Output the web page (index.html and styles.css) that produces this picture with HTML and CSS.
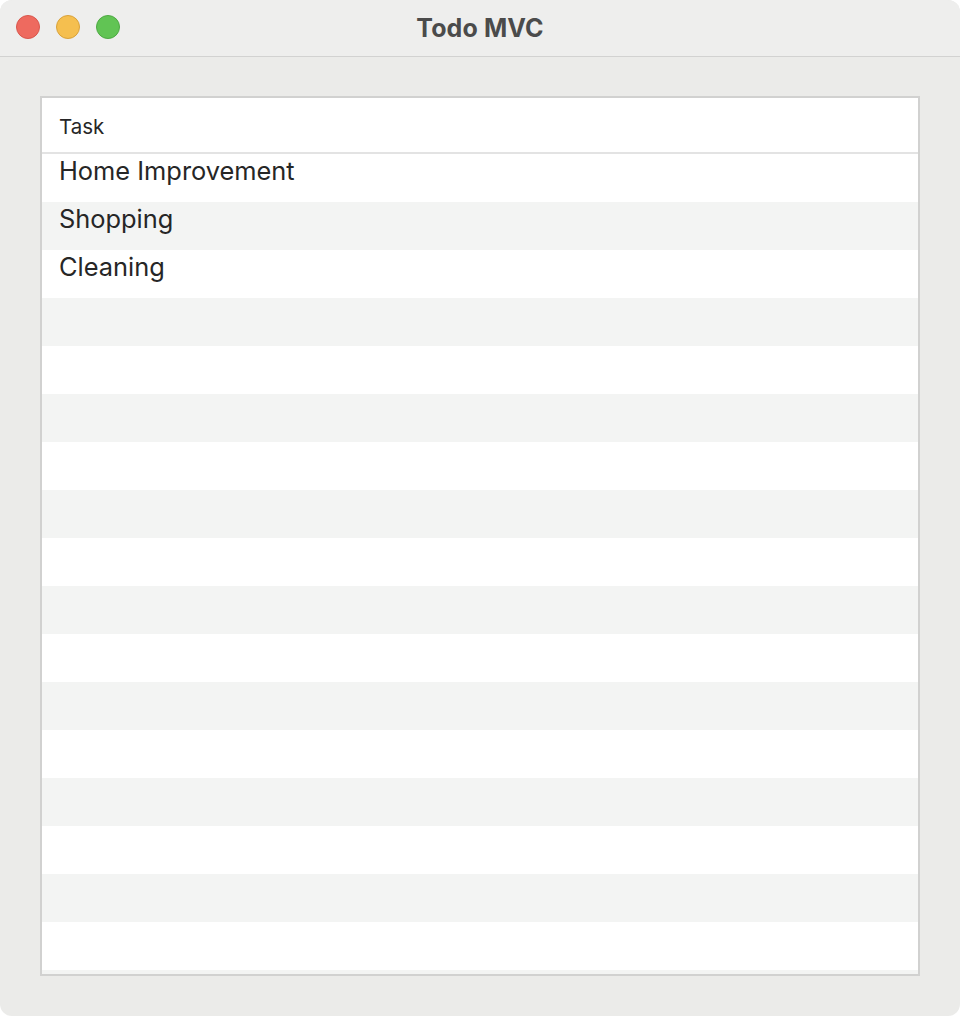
FILE: index.html
```html
<!DOCTYPE html>
<html>
<head>
<meta charset="utf-8">
<link rel="stylesheet" href="styles.css">
</head>
<body>
<div class="window">
  <div class="titlebar">
    <div class="lights">
      <span class="light red"></span>
      <span class="light yellow"></span>
      <span class="light green"></span>
    </div>
    <div class="title">Todo MVC</div>
  </div>
  <div class="content">
    <div class="table">
      <div class="header">Task</div>
      <div class="rows">
        <div class="row">Home Improvement</div>
        <div class="row">Shopping</div>
        <div class="row">Cleaning</div>
        <div class="row"></div>
        <div class="row"></div>
        <div class="row"></div>
        <div class="row"></div>
        <div class="row"></div>
        <div class="row"></div>
        <div class="row"></div>
        <div class="row"></div>
        <div class="row"></div>
        <div class="row"></div>
        <div class="row"></div>
        <div class="row"></div>
        <div class="row"></div>
        <div class="row"></div>
        <div class="row"></div>
      </div>
    </div>
  </div>
</div>
</body>
</html>
```

FILE: styles.css
```css
html, body {
  margin: 0;
  padding: 0;
  background: #ffffff;
}

body {
  font-family: Inter, "Liberation Sans", sans-serif;
  color: #262626;
}

.window {
  width: 960px;
  height: 1016px;
  border-radius: 12px;
  overflow: hidden;
  background: #ebebe9;
  display: flex;
  flex-direction: column;
}

.titlebar {
  height: 56px;
  flex: none;
  background: #eeeeed;
  border-bottom: 1px solid #d2d2d1;
  display: flex;
  align-items: center;
  justify-content: center;
  position: relative;
}

.lights {
  position: absolute;
  left: 16px;
  top: 15px;
  display: flex;
  gap: 16px;
}

.light {
  width: 22px;
  height: 22px;
  border-radius: 50%;
  border: 1px solid transparent;
}

.red { background: #ee6a5f; border-color: #d9574d; }
.yellow { background: #f5bf4f; border-color: #d9a23b; }
.green { background: #61c454; border-color: #4ea943; }

.title {
  font-weight: 700;
  font-size: 25px;
  color: #4b4b4b;
  letter-spacing: 0.1px;
}

.content {
  flex: 1;
  min-height: 0;
  padding: 39px 40px 40px 40px;
  display: flex;
}

.table {
  flex: 1;
  min-height: 0;
  border: 2px solid #d1d1d0;
  background: #f3f4f3;
  overflow: hidden;
  display: flex;
  flex-direction: column;
}

.header {
  height: 54px;
  flex: none;
  background: #ffffff;
  border-bottom: 2px solid #e3e3e3;
  padding-left: 17px;
  font-size: 20.5px;
  line-height: 57px;
  box-sizing: content-box;
}

.rows {
  flex: 1;
  min-height: 0;
  overflow: hidden;
}

.row {
  height: 48px;
  padding-left: 17px;
  font-size: 25.4px;
  line-height: 34px;
  background: #ffffff;
}

.row:nth-child(even) {
  background: #f3f4f3;
}
```
